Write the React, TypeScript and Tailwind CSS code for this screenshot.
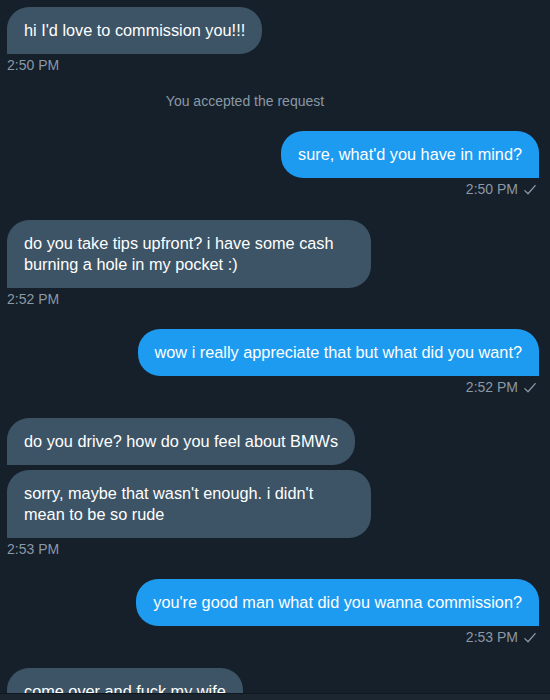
import React from "react";

type Msg =
  | { kind: "in"; texts: string[]; time: string }
  | { kind: "out"; text: string; time: string }
  | { kind: "system"; text: string };

const thread: Msg[] = [
  { kind: "in", texts: ["hi I'd love to commission you!!!"], time: "2:50 PM" },
  { kind: "system", text: "You accepted the request" },
  { kind: "out", text: "sure, what'd you have in mind?", time: "2:50 PM" },
  {
    kind: "in",
    texts: ["do you take tips upfront? i have some cash burning a hole in my pocket :)"],
    time: "2:52 PM",
  },
  { kind: "out", text: "wow i really appreciate that but what did you want?", time: "2:52 PM" },
  {
    kind: "in",
    texts: [
      "do you drive? how do you feel about BMWs",
      "sorry, maybe that wasn't enough. i didn't mean to be so rude",
    ],
    time: "2:53 PM",
  },
  { kind: "out", text: "you're good man what did you wanna commission?", time: "2:53 PM" },
  { kind: "in", texts: ["come over and fuck my wife"], time: "2:54 PM" },
];

function Check() {
  return (
    <svg width="14" height="14" viewBox="0 0 14 14" className="ml-[5px] mt-[1px]" fill="none">
      <path d="M1.8 7.6 L5 10.8 L12.2 2.6" stroke="#8b98a5" strokeWidth="1.3" strokeLinecap="round" strokeLinejoin="round" />
    </svg>
  );
}

function Bubble({ text, out }: { text: string; out?: boolean }) {
  return (
    <div
      className={`px-[17px] py-[13px] text-[16.3px] leading-[21px] text-white rounded-[22px] ${
        out ? "bg-[#1d9bf0] rounded-br-none max-w-[420px]" : "bg-[#3d5466] rounded-bl-none max-w-[364px]"
      }`}
    >
      {text}
    </div>
  );
}

export default function App() {
  return (
    <div
      className="w-[550px] h-[700px] bg-[#15202b] flex flex-col overflow-hidden"
      style={{ fontFamily: '"Liberation Sans", Arial, sans-serif' }}
    >
      <div className="flex-1 overflow-hidden px-[7px] pt-[7px] pr-[11px]">
        {thread.map((m, i) => {
          if (m.kind === "system") {
            return (
              <div key={i} className="mt-[20px] flex justify-center pr-[56px] text-[14px] leading-[16px] text-[#8b98a5]">
                {m.text}
              </div>
            );
          }
          if (m.kind === "out") {
            return (
              <div key={i} className="mt-[22px] flex flex-col items-end">
                <Bubble text={m.text} out />
                <div className="mt-[3px] mr-[2px] flex items-center text-[14px] leading-[16px] text-[#8b98a5]">
                  {m.time}
                  <Check />
                </div>
              </div>
            );
          }
          return (
            <div key={i} className={`${i === 0 ? "" : "mt-[23px]"} flex flex-col items-start`}>
              <div className="flex flex-col items-start gap-[5px]">
                {m.texts.map((t, j) => (
                  <Bubble key={j} text={t} />
                ))}
              </div>
              <div className="mt-[3px] text-[14px] leading-[16px] text-[#8b98a5]">{m.time}</div>
            </div>
          );
        })}
      </div>
      <div className="h-[7px] shrink-0 border-t border-[#10171e] bg-[#1b2631]" />
    </div>
  );
}
